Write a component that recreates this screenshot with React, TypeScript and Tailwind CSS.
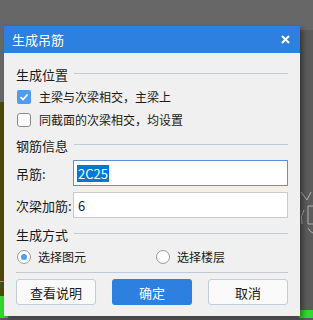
import React from "react";

const font = { fontFamily: '"Noto Sans CJK SC", "Microsoft YaHei", sans-serif' };

function SectionHeader({ title }: { title: string }) {
  return (
    <div className="flex h-[20px] items-center">
      <span className="text-[13px] leading-none text-[#1a1a1a] pr-[6px]">{title}</span>
      <div className="h-px flex-1 bg-[#c3cad5] -translate-y-[1px]" />
    </div>
  );
}

function Checkbox({ checked, label }: { checked: boolean; label: string }) {
  return (
    <div className="flex h-[20px] items-center">
      <div className="ml-px">
        {checked ? (
          <div className="flex h-[14px] w-[14px] items-center justify-center rounded-[2px] bg-[#4d9cf5]">
            <svg width="10" height="10" viewBox="0 0 10 10">
              <path d="M1.5 5.2 L4 7.5 L8.5 2.5" fill="none" stroke="#fff" strokeWidth="1.8" />
            </svg>
          </div>
        ) : (
          <div className="h-[14px] w-[14px] rounded-[3px] border border-[#8c8c8c] bg-white" />
        )}
      </div>
      <span className="ml-[8px] text-[12px] leading-none text-[#1a1a1a]">{label}</span>
    </div>
  );
}

function Radio({ checked, label }: { checked: boolean; label: string }) {
  return (
    <div className="flex items-center">
      <div className="ml-px flex h-[14px] w-[14px] items-center justify-center rounded-full border border-[#9a9a9a] bg-white">
        {checked && <div className="h-[6px] w-[6px] rounded-full bg-[#4d9cf5]" />}
      </div>
      <span className="ml-[7px] text-[12px] leading-none text-[#1a1a1a]">{label}</span>
    </div>
  );
}

export default function App() {
  return (
    <div className="relative h-[320px] w-[313px] overflow-hidden bg-[#676767]" style={font}>
      {/* background canvas */}
      <div className="absolute left-0 top-[102px] h-[194px] w-[6px] bg-[#4b4a06]" />
      <div className="absolute left-0 top-[281px] h-px w-[6px] bg-[#19c6c6]" />
      <div className="absolute left-0 top-[296px] h-[22px] w-[8px] bg-[#31d82d]" />
      <div className="absolute right-0 top-[30px] h-[290px] w-[14px] bg-[#5b5b5b]" />
      <div className="absolute right-0 top-[310px] h-[8px] w-[14px] bg-[#31d82d]" />
      <div className="absolute left-0 top-[318px] h-[2px] w-[313px] bg-[#5b5b5b]" />
      <svg className="absolute left-[298px] top-[180px]" width="15" height="70" viewBox="0 0 15 70">
        <path d="M3 12 L9 20 L13 12" fill="none" stroke="#c8c8c8" strokeWidth="0.8" />
        <path d="M6 30 Q2 36 4 44" fill="none" stroke="#c8c8c8" strokeWidth="0.8" />
        <path d="M10 26 L15 26 M10 26 L10 44 L15 44" fill="none" stroke="#c8c8c8" strokeWidth="0.8" />
        <path d="M10 48 Q12 52 15 53" fill="none" stroke="#c8c8c8" strokeWidth="0.8" />
      </svg>

      {/* dialog */}
      <div className="relative ml-[4px] mt-[26px] flex h-[290px] w-[296px] flex-col bg-[#f0f0f0] shadow-[3px_3px_5px_rgba(0,0,0,0.4)]">
        <div className="flex h-[27px] items-center justify-between bg-[#2e80e0] pl-[8px] pr-[10px]">
          <span className="text-[13px] leading-none text-white">生成吊筋</span>
          <svg width="9" height="9" viewBox="0 0 9 9">
            <path d="M1 1 L8 8 M8 1 L1 8" stroke="#fff" strokeWidth="2" />
          </svg>
        </div>
        <div className="flex flex-col px-[12px]">
          <div className="mt-[11px]">
            <SectionHeader title="生成位置" />
          </div>
          <div className="mt-[3px]">
            <Checkbox checked label="主梁与次梁相交，主梁上" />
          </div>
          <div className="mt-[3px]">
            <Checkbox checked={false} label="同截面的次梁相交，均设置" />
          </div>
          <div className="mt-[5px]">
            <SectionHeader title="钢筋信息" />
          </div>
          <div className="mt-[5px] flex h-[26px] items-center">
            <span className="w-[57px] text-[13px] leading-none text-[#1a1a1a]">吊筋:</span>
            <div className="flex h-[26px] flex-1 items-center border border-[#5f8fd6] bg-white pl-[3px]">
              <span className="flex h-[17px] items-center bg-[#0078d7] px-px text-[13px] leading-none text-white">2C25</span>
            </div>
          </div>
          <div className="mt-[6px] flex h-[26px] items-center">
            <span className="w-[57px] text-[13px] leading-none text-[#1a1a1a]">次梁加筋:</span>
            <div className="flex h-[26px] flex-1 items-center border border-[#cacaca] bg-white pl-[4px]">
              <span className="text-[13px] leading-none text-[#1a1a1a]">6</span>
            </div>
          </div>
          <div className="mt-[6px]">
            <SectionHeader title="生成方式" />
          </div>
          <div className="mt-[3px] flex h-[20px] items-center">
            <div className="w-[139px]">
              <Radio checked label="选择图元" />
            </div>
            <Radio checked={false} label="选择楼层" />
          </div>
          <div className="mt-[5px] h-px bg-[#c3cad5]" />
          <div className="mt-[6px] flex h-[26px] justify-between">
            <button className="flex w-[80px] items-center justify-center rounded-[3px] border border-[#c5ccd8] bg-[#fafafa] text-[13px] leading-none text-[#1a1a1a]">
              查看说明
            </button>
            <button className="flex w-[80px] items-center justify-center rounded-[3px] bg-[#2e80e0] text-[13px] leading-none text-white">
              确定
            </button>
            <button className="flex w-[80px] items-center justify-center rounded-[3px] border border-[#c5ccd8] bg-[#fafafa] text-[13px] leading-none text-[#1a1a1a]">
              取消
            </button>
          </div>
        </div>
      </div>
    </div>
  );
}
